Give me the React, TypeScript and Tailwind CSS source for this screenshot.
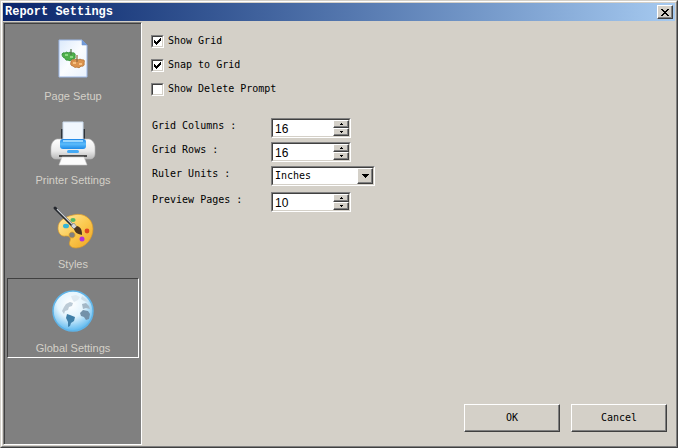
import { useState } from "react";
import type { ReactNode } from "react";

const sunken =
  "border border-t-[#808080] border-l-[#808080] border-r-white border-b-white";
const sunkenInner =
  "border border-t-[#404040] border-l-[#404040] border-r-[#d4d0c8] border-b-[#d4d0c8]";
const raised =
  "border border-t-white border-l-white border-r-[#404040] border-b-[#404040] bg-[#d4d0c8] shadow-[inset_-1px_-1px_0_#808080]";

function PageIcon() {
  return (
    <svg width="48" height="48" viewBox="0 0 48 48" aria-hidden="true">
      <defs>
        <linearGradient id="sheet" x1="0" y1="0" x2="1" y2="1">
          <stop offset="0" stopColor="#dbe9fb" />
          <stop offset="0.5" stopColor="#fbfdff" />
          <stop offset="1" stopColor="#e8f1fd" />
        </linearGradient>
      </defs>
      <path d="M10 5h23l5 5v32H10z" fill="url(#sheet)" stroke="#9db8e6" />
      <path d="M33 5v5h5z" fill="#6f9adb" stroke="#6f93cc" strokeWidth="0.6" />
      <path
        d="M13 19c1-2 3-1 3-1s1-1 2-1l1 1c1-1 3-1 4 0 2-1 4 1 3 3 1 2-1 4-3 3-1 2-3 2-4 1-2 1-3-1-3-2-2 0-3-2-3-4z"
        fill="#4fb04a"
        stroke="#2c8a33"
        strokeWidth="0.8"
      />
      <path d="M16 20h3M21 22h3" stroke="#a2e596" strokeWidth="1.4" />
      <path d="M22 14v6" stroke="#55764a" strokeWidth="1.2" />
      <path
        d="M22 27c0-2 2-3 3-2 1-1 3-1 4 0 1-1 3-1 4 0 2-1 3 1 2 3 1 2-1 4-3 3-1 2-3 2-4 1-2 1-3 0-4-1-2 0-3-2-2-4z"
        fill="#dc9450"
        stroke="#b06c2b"
        strokeWidth="0.8"
      />
      <path d="M24 28h3M30 29h3" stroke="#ffcf93" strokeWidth="1.4" />
      <path d="M28 20v7" stroke="#8f6a3c" strokeWidth="1.2" />
    </svg>
  );
}

function PrinterIcon() {
  return (
    <svg width="48" height="48" viewBox="0 0 48 48" aria-hidden="true">
      <defs>
        <linearGradient id="printerBody" x1="0" y1="0" x2="0" y2="1">
          <stop offset="0" stopColor="#ffffff" />
          <stop offset="0.6" stopColor="#e9e9e9" />
          <stop offset="1" stopColor="#b9b9b9" />
        </linearGradient>
        <linearGradient id="printerTop" x1="0" y1="0" x2="0" y2="1">
          <stop offset="0" stopColor="#1f86e6" />
          <stop offset="0.5" stopColor="#5cbcfb" />
          <stop offset="1" stopColor="#1d8ae8" />
        </linearGradient>
      </defs>
      <path d="M12 10h24v10H12z" fill="#2f3338" />
      <path
        d="M8 20h32c4 1 6 5 6 9v5c0 4-2 6-5 6H7c-3 0-5-2-5-6v-5c0-4 2-8 6-9z"
        fill="url(#printerBody)"
        stroke="#b5b5b5"
        strokeWidth="0.6"
      />
      <path d="M14 3h20v18H14z" fill="#f1f7fe" stroke="#ccdcee" />
      <rect x="11" y="20" width="26" height="10" rx="3" fill="url(#printerTop)" />
      <path d="M14 22h20" stroke="#9ad6fd" strokeWidth="2" />
      <rect x="18" y="31" width="12" height="3" rx="1.5" fill="#45aaf5" />
      <path d="M10 37h28" stroke="#4d4d4d" strokeWidth="2" />
      <path d="M13 38h22l3 8H10z" fill="#fbfbfb" stroke="#c9c9c9" strokeWidth="0.6" />
    </svg>
  );
}

function PaletteIcon() {
  return (
    <svg width="48" height="48" viewBox="0 0 48 48" aria-hidden="true">
      <defs>
        <linearGradient id="palette" x1="0" y1="0" x2="1" y2="1">
          <stop offset="0" stopColor="#ffeaa8" />
          <stop offset="0.5" stopColor="#fbcb52" />
          <stop offset="1" stopColor="#f0a41f" />
        </linearGradient>
      </defs>
      <path
        fillRule="evenodd"
        d="M24 12c11-3 20 4 20 14s-8 19-17 19c-5 0-8-3-6-7 1-3 0-5-4-5-5 1-8-3-8-8 0-7 6-11 15-13zM23 29a3 3 0 1 0 .1 0z"
        fill="url(#palette)"
        stroke="#d99a28"
        strokeWidth="0.7"
      />
      <ellipse cx="17" cy="23" rx="3" ry="2.3" fill="#35b5d5" />
      <ellipse cx="24" cy="17" rx="2.6" ry="2" fill="#55b867" />
      <circle cx="38" cy="28" r="2.4" fill="#df4720" />
      <circle cx="33" cy="36" r="2.5" fill="#b532d6" />
      <path d="M6 5l20 20" stroke="#25282e" strokeWidth="3" strokeLinecap="round" />
      <path d="M8 6l18 18" stroke="#c8ccd2" strokeWidth="1.2" />
      <path d="M22 23l3-3 3 4-3 2z" fill="#d5d7da" stroke="#6a6c70" strokeWidth="0.5" />
      <path d="M25 26l3-3c4 1 5 4 5 9-4-1-7-2-8-6z" fill="#4b3520" />
    </svg>
  );
}

function GlobeIcon() {
  return (
    <svg width="48" height="48" viewBox="0 0 48 48" aria-hidden="true">
      <defs>
        <radialGradient id="globe" cx="0.45" cy="0.32" r="0.68">
          <stop offset="0" stopColor="#ffffff" />
          <stop offset="0.5" stopColor="#e3f4fd" />
          <stop offset="1" stopColor="#5cb8ef" />
        </radialGradient>
      </defs>
      <circle cx="24" cy="24" r="20" fill="url(#globe)" stroke="#5fb4e8" strokeWidth="1.5" />
      <path d="M13 24l2-4 2-3 4-2 3 1-1 3-3 1-1 3-3 1-1 3z" fill="#bccbd6" />
      <path d="M22 9l5-1 4 2-2 3-4 2-2-3z" fill="#dfeaf1" />
      <path d="M18 27l3 1 5 2-1 4-3 2-1 3-2 1 0-5-2-4z" fill="#3f7fa8" />
      <path d="M31 26l3-3 5 1 2 3-1 5-3 1-2-3-3-1z" fill="#7391a9" />
      <path d="M33 17l4-1 3 3 1 3-4-1-3 1z" fill="#a4b8c7" />
      <path d="M33 9l4 3 2 3-4-1-3-2z" fill="#ccdde8" />
    </svg>
  );
}

type NavItem = { name: string; icon: ReactNode };

const navItems: NavItem[] = [
  { name: "Page Setup", icon: <PageIcon /> },
  { name: "Printer Settings", icon: <PrinterIcon /> },
  { name: "Styles", icon: <PaletteIcon /> },
  { name: "Global Settings", icon: <GlobeIcon /> },
];

function CheckField({ id, title, defaultChecked }: { id: string; title: string; defaultChecked?: boolean }) {
  return (
    <div className="flex h-6 items-center gap-1">
      <span className={`relative size-[13px] ${sunken}`}>
        <input
          type="checkbox"
          id={id}
          defaultChecked={defaultChecked}
          className={`peer block size-full appearance-none bg-white ${sunkenInner}`}
        />
        <svg
          viewBox="0 0 7 7"
          shapeRendering="crispEdges"
          className="pointer-events-none absolute top-0.5 left-0.5 hidden size-[7px] peer-checked:block"
          aria-hidden="true"
        >
          <path d="M0 2h1v1h1v1h1v-1h1v-1h1v-1h1v-1h1v3h-1v1h-1v1h-1v1h-1v1h-1v-1h-1v-1h-1z" fill="#000" />
        </svg>
      </span>
      <label htmlFor={id}>{title}</label>
    </div>
  );
}

function FieldRow({ id, title, children }: { id: string; title: string; children: ReactNode }) {
  return (
    <div className="flex h-6 items-center">
      <label htmlFor={id} className="w-[120px] pb-1 pl-px">
        {title}
      </label>
      {children}
    </div>
  );
}

function SpinField({ id, title, initial }: { id: string; title: string; initial: number }) {
  const [value, setValue] = useState(initial);
  const stepButton = `flex h-2 w-4 items-center justify-center ${raised}`;

  return (
    <FieldRow id={id} title={title}>
      <div className={`w-20 ${sunken}`}>
        <div className={`flex h-[18px] bg-white ${sunkenInner}`}>
          <input
            type="text"
            inputMode="numeric"
            id={id}
            value={value}
            onChange={(event) => setValue(Number(event.target.value) || 0)}
            className="min-w-0 flex-1 pt-0.5 pl-0.5 font-['Liberation_Sans'] text-xs leading-4 outline-none"
          />
          <div className="flex flex-col">
            <button type="button" aria-label="Increase" className={stepButton} onClick={() => setValue(value + 1)}>
              <svg width="3" height="2" viewBox="0 0 3 2" shapeRendering="crispEdges">
                <path d="M1 0h1v1h1v1H0V1h1z" />
              </svg>
            </button>
            <button type="button" aria-label="Decrease" className={stepButton} onClick={() => setValue(value - 1)}>
              <svg width="3" height="2" viewBox="0 0 3 2" shapeRendering="crispEdges">
                <path d="M0 0h3v1H2v1H1V1H0z" />
              </svg>
            </button>
          </div>
        </div>
      </div>
    </FieldRow>
  );
}

export default function App() {
  const [active, setActive] = useState("Global Settings");

  return (
    <div className="flex min-h-screen flex-col border border-t-[#d4d0c8] border-r-[#404040] border-b-[#404040] border-l-[#d4d0c8] bg-[#d4d0c8] font-['DejaVu_Sans_Mono',monospace] text-[10px] leading-4 text-black">
      <div className="flex flex-1 flex-col border border-t-white border-r-[#808080] border-b-[#808080] border-l-white p-px">
        <header className="flex h-[18px] items-center justify-between bg-linear-to-r from-[#0a246a] to-[#a6caf0] pr-0.5 pl-0.5">
          <h1 className="font-['Liberation_Mono'] text-xs leading-4 font-bold text-white">Report Settings</h1>
          <button type="button" aria-label="Close" className={`flex h-3.5 w-4 items-center justify-center ${raised}`}>
            <svg width="8" height="7" viewBox="0 0 8 7" shapeRendering="crispEdges">
              <path d="M0 0h2v1h1v1h2V1h1V0h2v1H7v1H6v1H5v1h1v1h1v1h1v1H6V6H5V5H3v1H2v1H0V6h1V5h1V4h1V3H2V2H1V1H0z" />
            </svg>
          </button>
        </header>

        <div className="mt-px flex flex-1">
          <nav className={`w-[139px] ${sunken}`}>
            <div className="flex h-full flex-col gap-1 border-t border-l border-[#404040] bg-[#808080] px-0.5 pt-0.5">
              {navItems.map((item) => (
                <button
                  key={item.name}
                  type="button"
                  onClick={() => setActive(item.name)}
                  className={`flex h-20 flex-col items-center border pt-2 font-['Liberation_Sans'] text-[11px] leading-4 text-[#d4d0c8] ${
                    active === item.name
                      ? "border-t-[#404040] border-r-white border-b-white border-l-[#404040]"
                      : "border-transparent"
                  }`}
                >
                  {item.icon}
                  <span className="pt-[5px]">{item.name}</span>
                </button>
              ))}
            </div>
          </nav>

          <main className="flex flex-1 flex-col pt-[7px] pr-2 pb-[13px] pl-[9px]">
            <form className="flex flex-1 flex-col" onSubmit={(event) => event.preventDefault()}>
              <CheckField id="showGrid" title="Show Grid" defaultChecked />
              <CheckField id="snapToGrid" title="Snap to Grid" defaultChecked />
              <CheckField id="deletePrompt" title="Show Delete Prompt" />

              <div className="mt-[15px]">
                <SpinField id="gridColumns" title="Grid Columns :" initial={16} />
                <SpinField id="gridRows" title="Grid Rows :" initial={16} />
                <FieldRow id="rulerUnits" title="Ruler Units :">
                  <div className={`relative w-[104px] ${sunken}`}>
                    <select
                      id="rulerUnits"
                      className={`block h-[18px] w-full appearance-none bg-white pl-0.5 outline-none ${sunkenInner}`}
                    >
                      <option>Inches</option>
                      <option>Centimeters</option>
                      <option>Pixels</option>
                    </select>
                    <span
                      className={`pointer-events-none absolute top-px right-px flex h-4 w-4 items-center justify-center ${raised}`}
                    >
                      <svg width="7" height="4" viewBox="0 0 7 4" shapeRendering="crispEdges">
                        <path d="M0 0h7v1H6v1H5v1H4v1H3V3H2V2H1V1H0z" />
                      </svg>
                    </span>
                  </div>
                </FieldRow>
                <div className="pt-0.5">
                  <SpinField id="previewPages" title="Preview Pages :" initial={10} />
                </div>
              </div>

              <div className="mt-auto flex justify-end gap-[11px]">
                <button type="submit" className={`h-7 w-24 ${raised}`}>
                  OK
                </button>
                <button type="button" className={`h-7 w-24 ${raised}`}>
                  Cancel
                </button>
              </div>
            </form>
          </main>
        </div>
      </div>
    </div>
  );
}
